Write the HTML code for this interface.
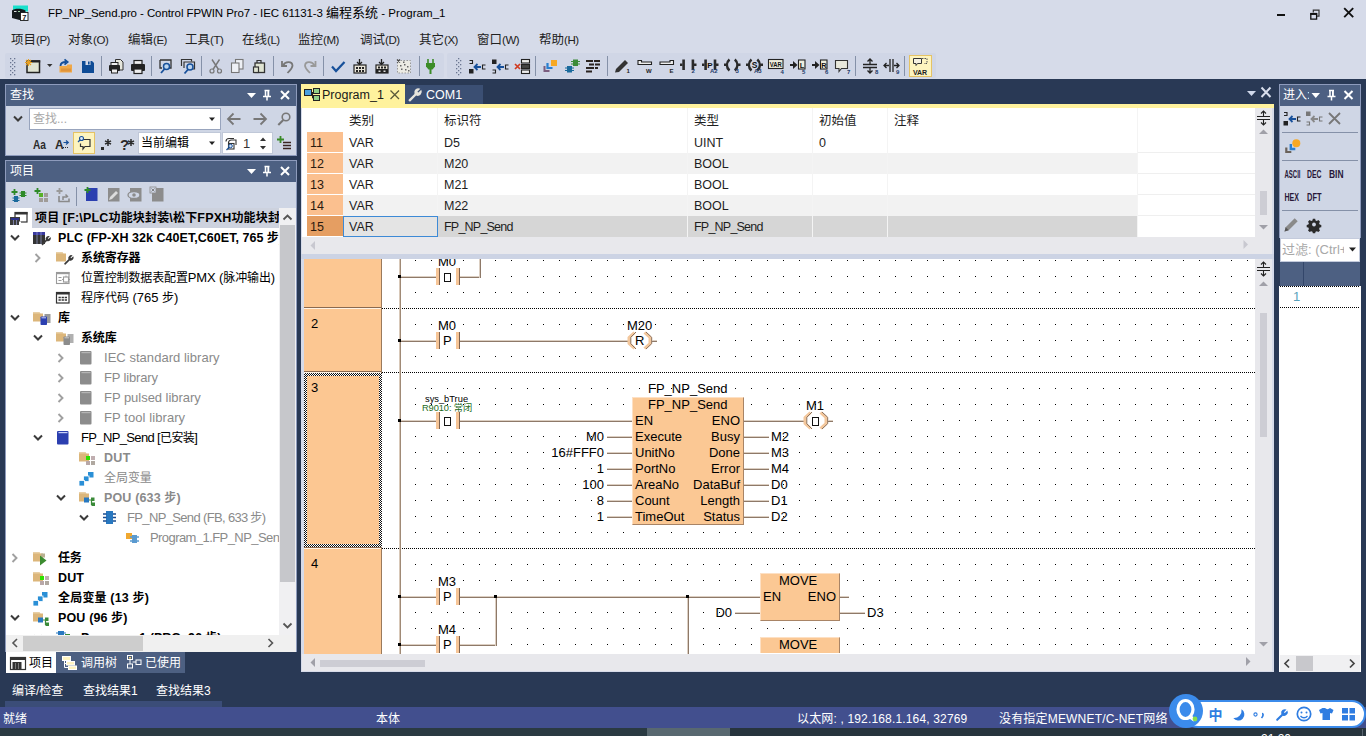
<!DOCTYPE html>
<html lang="zh-CN">
<head>
<meta charset="utf-8">
<title>FP_NP_Send.pro - Control FPWIN Pro7 - IEC 61131-3 编程系统 - Program_1</title>
<style>
html,body{margin:0;padding:0;}
body{width:1366px;height:736px;overflow:hidden;background:#293955;position:relative;
 font-family:"Liberation Sans","Noto Sans CJK SC",sans-serif;font-size:12px;color:#1e1e1e;}
.a{position:absolute;}
.t{position:absolute;white-space:nowrap;line-height:16px;}
svg{position:absolute;overflow:visible;}
#top{left:0;top:0;width:1366px;height:79px;background:#d6dbe9;}
.menu{top:32px;font-size:12px;color:#222;}
.mc{font-size:12.5px;}
.ml{font-size:11.5px;letter-spacing:-0.45px;}
.sep{position:absolute;width:1px;height:20px;top:56px;background:#8591a8;}
.ph{position:absolute;background:#4d6082;border:1px solid #8e9bbc;border-bottom:none;box-sizing:border-box;}
.pht{position:absolute;color:#fff;font-size:12px;line-height:16px;white-space:nowrap;}
.tree{position:absolute;white-space:nowrap;font-size:12px;line-height:16px;color:#000;}
.tb{font-weight:bold;}
.tg{color:#8a8a8a;}
.lad{position:absolute;white-space:nowrap;font-size:13px;line-height:16px;color:#000;font-family:"Liberation Sans",sans-serif;}
.w{position:absolute;background:#c9a685;}
.cell{position:absolute;white-space:nowrap;font-size:12.5px;line-height:16px;color:#1e1e1e;}
</style>
</head>
<body>
<div id="top" class="a"></div>
<div class="a" style="left:5px;top:53px;width:439px;height:25px;background:#d0d6e6;border-radius:2px"></div>
<div class="a" style="left:447px;top:53px;width:489px;height:25px;background:#d0d6e6;border-radius:2px"></div>
<!-- app icon -->
<svg style="left:10px;top:4px" width="22" height="20" viewBox="0 0 22 20">
 <path d="M3 1.500h15v6h-15z" fill="#19e0cc"/>
 <path d="M2 6.500c2-2.500 10-2.500 13.500 0v8.500l-6 1l-7.500-2z" fill="#141a1c"/>
 <rect x="4" y="7" width="2.500" height="1" fill="#e0e0e0"/><rect x="8" y="7" width="2" height="1" fill="#9ad0a0"/>
 <rect x="10.500" y="8.500" width="7.500" height="8" fill="#fff" stroke="#1a1a1a" stroke-width="0.900"/>
 <text x="14.300" y="15.500" font-size="7.500" font-weight="bold" text-anchor="middle" fill="#111" font-family="Liberation Sans, sans-serif">7</text>
</svg>
<div class="t" id="title" style="left:48px;top:5px;font-size:12px;color:#000"><span id="t1" style="font-size:11.5px;letter-spacing:-0.086px">FP_NP_Send.pro - Control FPWIN Pro7 - IEC 61131-3 </span><span id="t2" style="font-size:13px">编程系统</span><span id="t3" style="font-size:11.5px;letter-spacing:0.03px"> - Program_1</span></div>
<!-- window controls -->
<svg style="left:0;top:0" width="1366" height="27">
 <rect x="1277" y="14" width="8" height="2" fill="#111"/>
 <path d="M1310.800 13.800h5.800v5.400h-5.800z" fill="none" stroke="#111" stroke-width="1.300"/><path d="M1310.200 13.900h7" stroke="#111" stroke-width="2"/><path d="M1313.300 12.500v-2.300h5.700v6h-2" fill="none" stroke="#333" stroke-width="1.200"/>
 <path d="M1344.200 8.200l9 9M1353.200 8.200l-9 9" stroke="#111" stroke-width="1.900" fill="none"/>
</svg>
<!-- menu -->
<div class="t menu" style="left:11px"><span class="mc">项目</span><span class="ml">(P)</span></div>
<div class="t menu" style="left:68px"><span class="mc">对象</span><span class="ml">(O)</span></div>
<div class="t menu" style="left:128px"><span class="mc">编辑</span><span class="ml">(E)</span></div>
<div class="t menu" style="left:185px"><span class="mc">工具</span><span class="ml">(T)</span></div>
<div class="t menu" style="left:242px"><span class="mc">在线</span><span class="ml">(L)</span></div>
<div class="t menu" style="left:298px"><span class="mc">监控</span><span class="ml">(M)</span></div>
<div class="t menu" style="left:360px"><span class="mc">调试</span><span class="ml">(D)</span></div>
<div class="t menu" style="left:419px"><span class="mc">其它</span><span class="ml">(X)</span></div>
<div class="t menu" style="left:477px"><span class="mc">窗口</span><span class="ml">(W)</span></div>
<div class="t menu" style="left:539px"><span class="mc">帮助</span><span class="ml">(H)</span></div>
<!-- toolbar separators -->
<div class="sep" style="left:101px"></div><div class="sep" style="left:151px"></div><div class="sep" style="left:201px"></div>
<div class="sep" style="left:273px"></div><div class="sep" style="left:323px"></div><div class="sep" style="left:419px"></div>
<div class="sep" style="left:535px"></div><div class="sep" style="left:607px"></div><div class="sep" style="left:855px"></div><div class="sep" style="left:904px"></div>
<div class="a" style="left:909px;top:55px;width:23px;height:22px;background:#fdf4bf;border:1px solid #e5c365;box-sizing:border-box"></div>
<svg id="tbi" style="left:0;top:0" width="1366" height="80" font-family="Liberation Sans, sans-serif">
<defs>
 <pattern id="grip" x="10" y="58" width="4" height="4" patternUnits="userSpaceOnUse"><rect x="0" y="0" width="1.300" height="1.300" fill="#6a7590"/><rect x="2" y="2" width="1.300" height="1.300" fill="#6a7590"/></pattern>
</defs>
<rect x="10" y="58" width="6" height="18" fill="url(#grip)"/>
<rect x="456" y="58" width="6" height="18" fill="url(#grip)"/>
<!-- new -->
<rect x="27" y="61" width="12.500" height="11.500" fill="#e0e4d2" stroke="#222" stroke-width="1.500"/><rect x="31" y="60.300" width="9.200" height="2.200" fill="#222"/>
<path d="M28.500 59v7M25 62.500h7M26 60l5 5M31 60l-5 5" stroke="#e8a020" stroke-width="1.100"/>
<path d="M47 64h5.500l-2.750 3z" fill="#333"/>
<!-- open -->
<path d="M59.500 72.500v-6.500h7l1-1.500h4.500v8z" fill="#f0a848"/><rect x="61" y="68.500" width="10" height="3" fill="#e0943a"/>
<path d="M60.500 66c0-3 2-4 5.500-4" fill="none" stroke="#17509a" stroke-width="1.800"/><path d="M64.500 59.300l3.200 2.700-3.200 2.700" fill="none" stroke="#17509a" stroke-width="1.700"/>
<!-- save -->
<path d="M82 61h10l2 2v10h-12z" fill="#0f4c96"/><rect x="85.500" y="61" width="5" height="4" fill="#d6dbe9"/><rect x="88" y="61.500" width="1.600" height="3" fill="#0f4c96"/>
<!-- print preview -->
<path d="M115.500 59.500h5l2.500 2.500v8h-7.500z" fill="#e6e6dc" stroke="#333" stroke-width="1"/>
<rect x="109" y="65" width="11" height="6" rx="1" fill="#222"/><rect x="111" y="62.500" width="7" height="3" fill="#eee" stroke="#222" stroke-width="1"/><rect x="111.500" y="69" width="6" height="4" fill="#eee" stroke="#222" stroke-width="1"/>
<!-- print -->
<rect x="131" y="64" width="14" height="7" rx="1" fill="#222"/><rect x="134" y="60.500" width="8" height="4" fill="#eee" stroke="#222" stroke-width="1.200"/><rect x="134" y="69" width="8" height="4.500" fill="#eee" stroke="#222" stroke-width="1.200"/>
<!-- find -->
<path d="M160 60h11v8h-4" fill="none" stroke="#333" stroke-width="1.300"/><path d="M160 60v8h2" fill="none" stroke="#333" stroke-width="1.300"/>
<circle cx="166.500" cy="66.500" r="3" fill="#bcd4ee" stroke="#17509a" stroke-width="1.500"/><path d="M164.500 69l-3.500 4" stroke="#17509a" stroke-width="1.800"/>
<!-- find2 -->
<path d="M181.500 66v-6.500h10v2" fill="none" stroke="#333" stroke-width="1.200"/><path d="M184 68v-6h10.500v7h-3" fill="none" stroke="#333" stroke-width="1.200"/>
<circle cx="190" cy="67" r="3" fill="#bcd4ee" stroke="#17509a" stroke-width="1.500"/><path d="M188 69.500l-3.500 4" stroke="#17509a" stroke-width="1.800"/>
<!-- cut -->
<path d="M212 59.500l6.500 10M219.500 59.500l-6.500 10" stroke="#777" stroke-width="1.400" fill="none"/><circle cx="212" cy="71" r="2" fill="none" stroke="#777" stroke-width="1.200"/><circle cx="219.500" cy="71" r="2" fill="none" stroke="#777" stroke-width="1.200"/>
<!-- copy -->
<rect x="235.500" y="59.500" width="7.500" height="9.500" fill="#eef0f5" stroke="#777" stroke-width="1.100"/><rect x="231.500" y="63" width="7.500" height="9.500" fill="#eef0f5" stroke="#777" stroke-width="1.100"/>
<!-- paste -->
<path d="M257 63v-2.500h4v2.500" fill="none" stroke="#333" stroke-width="1.200"/><rect x="255" y="63" width="9.500" height="9.500" fill="#e0e4d2" stroke="#333" stroke-width="1.300"/><rect x="253.500" y="67" width="5" height="5.500" fill="#e0e4d2" stroke="#333" stroke-width="1.200"/>
<!-- undo redo -->
<path d="M282 61v5h5" fill="none" stroke="#777" stroke-width="1.800"/><path d="M283 65.500c2-4 9-5 9.500 0c0 3-3 5-5 7.500" fill="none" stroke="#777" stroke-width="1.800"/>
<path d="M315.500 61v5h-5" fill="none" stroke="#999" stroke-width="1.800"/><path d="M314.500 65.500c-2-4-9-5-9.500 0c0 3 3 5 5 7.500" fill="none" stroke="#999" stroke-width="1.800"/>
<!-- check -->
<path d="M332 66.500l4 4.500l8.500-9" fill="none" stroke="#17509a" stroke-width="2.200"/>
<!-- download icons -->
<g id="dl1"><path d="M359.500 59v5M357 62l2.500 2.500l2.500-2.500" stroke="#222" stroke-width="1.300" fill="none"/><rect x="354" y="65" width="12" height="8" fill="#e8e4d8" stroke="#222" stroke-width="1.200"/><rect x="356" y="67" width="2" height="2" fill="#222"/><rect x="359" y="67" width="2" height="2" fill="#222"/><rect x="362" y="67" width="2" height="2" fill="#222"/><rect x="356" y="70" width="2" height="2" fill="#222"/><rect x="359" y="70" width="2" height="2" fill="#222"/><rect x="362" y="70" width="2" height="2" fill="#222"/></g>
<g><path d="M381.500 59v5M379 62l2.500 2.500l2.500-2.500" stroke="#222" stroke-width="1.300" fill="none"/><rect x="376" y="65" width="12" height="8" fill="#e8e4d8" stroke="#222" stroke-width="1.200"/><rect x="376" y="69" width="12" height="4" fill="#222"/><rect x="378" y="66.500" width="2" height="2" fill="#222"/><rect x="381" y="66.500" width="2" height="2" fill="#222"/><rect x="384" y="66.500" width="2" height="2" fill="#222"/><rect x="378.500" y="70.500" width="2" height="1.500" fill="#ddd"/><rect x="383.500" y="70.500" width="2" height="1.500" fill="#ddd"/></g>
<g><rect x="397.500" y="60.500" width="13" height="12.500" fill="#ecebe4" stroke="#999" stroke-width="1" stroke-dasharray="1.500 1.500"/><path d="M397 59.500l3 3M400 59.500l-3 3" stroke="#444" stroke-width="1.200"/><rect x="400" y="65" width="1.500" height="1.500" fill="#666"/><rect x="404" y="64" width="1.500" height="1.500" fill="#666"/><rect x="407" y="66" width="1.500" height="1.500" fill="#666"/><rect x="401" y="68.500" width="1.500" height="1.500" fill="#666"/><rect x="405" y="69" width="1.500" height="1.500" fill="#666"/><rect x="408" y="70" width="1.500" height="1.500" fill="#666"/><rect x="403" y="61.500" width="1.500" height="1.500" fill="#666"/></g>
<!-- plug -->
<path d="M428 59v4M433 59v4" stroke="#3c8c28" stroke-width="1.600"/><path d="M426 63h9v3.500l-2.500 3h-4l-2.500-3z" fill="#3c8c28"/><rect x="429.500" y="69" width="2" height="5" fill="#3c8c28"/>
<!-- navigate icons -->
<g><path d="M469.500 60.500h3v3h-3" fill="none" stroke="#222" stroke-width="1.100"/><rect x="469" y="69" width="4.500" height="4.500" fill="#222"/><path d="M481 67h-6M477.500 64l-3 3l3 3" stroke="#17509a" stroke-width="1.800" fill="none"/><path d="M485.500 65h-3v4h3" fill="none" stroke="#222" stroke-width="1.100"/></g>
<g><rect x="492" y="59.500" width="4.500" height="4.500" fill="#222"/><path d="M492.500 70h3v3h-3" fill="none" stroke="#222" stroke-width="1.100"/><path d="M504 67h-6M500.500 64l-3 3l3 3" stroke="#17509a" stroke-width="1.800" fill="none"/><path d="M508.500 65h-3v4h3" fill="none" stroke="#222" stroke-width="1.100"/></g>
<g><rect x="521.500" y="59.500" width="8" height="3.500" fill="#eee" stroke="#222" stroke-width="1.100"/><rect x="521.500" y="64.500" width="8" height="4" fill="#444" stroke="#222" stroke-width="1.100"/><rect x="521.500" y="70" width="8" height="3.500" fill="#eee" stroke="#222" stroke-width="1.100"/><path d="M515 64l5 5M520 64l-5 5" stroke="#d03a20" stroke-width="1.700"/></g>
<!-- pou icons -->
<g><rect x="551" y="60" width="6" height="6" fill="#f7a823"/><path d="M547.500 63v5h5" fill="none" stroke="#2a7fd0" stroke-width="2.200"/><path d="M544.500 66v5h5" fill="none" stroke="#7b5d7e" stroke-width="2"/></g>
<g><rect x="573" y="59.500" width="5" height="6.500" fill="#3a8a38"/><path d="M571 61.500h9M571 64h9" stroke="#3a8a38" stroke-width="1.200"/><rect x="567" y="66" width="5" height="6.500" fill="#1a6a9c"/><path d="M565 68h9M565 70.500h9" stroke="#1a6a9c" stroke-width="1.200"/></g>
<g fill="#2a2320"><rect x="586" y="60" width="7" height="2"/><rect x="594" y="60" width="6" height="2"/><rect x="589" y="63.500" width="5" height="2"/><rect x="595" y="63.500" width="5" height="2"/><rect x="586" y="67" width="8" height="2"/><rect x="595" y="67" width="3" height="2"/><rect x="586" y="70.500" width="6" height="2"/></g>
<!-- pencil -->
<path d="M615 72.500l1-3.500l9-9l3 3l-9 9z" fill="#333"/><text x="626.500" y="73" font-size="6" font-weight="bold" fill="#222">1</text>
<path d="M638 60.500v4h13.500v-2.500h-10v-1.500z" fill="#eee" stroke="#222" stroke-width="1.100"/><text x="646" y="73" font-size="6" font-weight="bold" fill="#222">W</text>
<path d="M673.500 60.500v4h-13.500v-2.500h10v-1.500z" fill="#eee" stroke="#222" stroke-width="1.100"/><text x="669.500" y="73" font-size="6" font-weight="bold" fill="#222">E</text>
<!-- contacts -->
<g fill="#2a2a2a"><rect x="682.300" y="59.500" width="2.600" height="10.500"/><rect x="691.600" y="59.500" width="2.600" height="10.500"/><rect x="680" y="63.500" width="2.500" height="2.500"/><rect x="694" y="63.500" width="2.500" height="2.500"/></g><text x="691.500" y="73" font-size="6" font-weight="bold" fill="#1c3a6a">2</text>
<g fill="#2a2a2a"><rect x="704.300" y="59.500" width="2.600" height="10.500"/><rect x="713.700" y="59.500" width="2.600" height="10.500"/><rect x="702" y="63.500" width="2.500" height="2.500"/><rect x="716" y="63.500" width="2.500" height="2.500"/></g><text x="707.300" y="68" font-size="8" font-weight="bold" fill="#111">P</text><text x="710" y="73" font-size="6" font-weight="bold" fill="#1c3a6a">A2</text>
<g stroke="#2a2a2a" fill="none"><path d="M729.500 59.500c-3.500 3-3.500 8 0 11M734.800 59.500c3.500 3 3.500 8 0 11" stroke-width="2.400"/></g><g fill="#2a2a2a"><rect x="724" y="63.500" width="2.500" height="2.500"/><rect x="738" y="63.500" width="2.500" height="2.500"/></g><text x="735.500" y="73" font-size="6" font-weight="bold" fill="#1c3a6a">3</text>
<g stroke="#2a2a2a" fill="none"><path d="M751.500 59.500c-3.500 3-3.500 8 0 11M757.300 59.500c3.500 3 3.500 8 0 11" stroke-width="2.400"/></g><g fill="#2a2a2a"><rect x="746" y="63.500" width="2.500" height="2.500"/><rect x="760.500" y="63.500" width="2.500" height="2.500"/></g><text x="751.800" y="68.300" font-size="8.500" font-weight="bold" fill="#111">S</text><text x="754" y="73" font-size="6" font-weight="bold" fill="#1c3a6a">A3</text>
<rect x="768.500" y="59.500" width="14.500" height="9" fill="#eeeedd" stroke="#222" stroke-width="1.100"/><text x="769.800" y="67.200" font-size="7.500" font-weight="bold" fill="#111" textLength="12" lengthAdjust="spacingAndGlyphs">VAR</text><text x="780.500" y="73.500" font-size="6" font-weight="bold" fill="#1c3a6a">4</text>
<g><path d="M790 65h4" stroke="#222" stroke-width="2"/><path d="M793 61l4.500 4l-4.500 4z" fill="#222"/><rect x="798.500" y="60" width="6.500" height="9" fill="#eeeedd" stroke="#222" stroke-width="1.100"/><text x="799.800" y="67.500" font-size="7.500" font-weight="bold" fill="#111">L</text><text x="802" y="74" font-size="6" font-weight="bold" fill="#1c3a6a">5</text></g>
<g><path d="M812 65h4" stroke="#222" stroke-width="2"/><path d="M815 61l4.500 4l-4.500 4z" fill="#222"/><rect x="820.500" y="60" width="6.500" height="9" fill="#eeeedd" stroke="#222" stroke-width="1.100"/><text x="821.300" y="67.500" font-size="7.500" font-weight="bold" fill="#111">R</text><text x="825" y="74" font-size="6" font-weight="bold" fill="#1c3a6a">6</text></g>
<path d="M835.500 60.500h12v8h-6l-2.500 3v-3h-3.500z" fill="#e8e8dc" stroke="#333" stroke-width="1.100"/><text x="847" y="74" font-size="6" font-weight="bold" fill="#1c3a6a">7</text>
<g stroke="#222" fill="none" stroke-width="1.300"><path d="M863 64.500h14M863 67.500h14"/><path d="M870 59v5M867.500 61.500l2.500-2.500l2.500 2.500M870 73v-5M867.500 70.500l2.500 2.500l2.500-2.500"/></g><text x="875" y="74" font-size="6" font-weight="bold" fill="#1c3a6a">8</text>
<g stroke="#222" fill="none" stroke-width="1.300"><path d="M890 59v13M893 59v13"/><path d="M884 65.500h5M886.500 63l-2.500 2.500l2.500 2.500M899 65.500h-5M896.500 63l2.500 2.500l-2.500 2.500"/></g><text x="896" y="74" font-size="6" font-weight="bold" fill="#1c3a6a">9</text>
<path d="M913.500 58.500h8v5h-4l-1.500 2v-2h-2.500z" fill="#f4f0e0" stroke="#333" stroke-width="1"/><path d="M922 58.500h5v5h-3" fill="none" stroke="#555" stroke-width="1" stroke-dasharray="1.500 1"/><text x="913" y="74.500" font-size="7" font-weight="bold" fill="#222" textLength="14">VAR</text>
</svg>
<!-- ===== LEFT: find panel ===== -->
<svg width="0" height="0" style="left:0;top:0"><defs>
<symbol id="hdr3" viewBox="0 0 44 12" overflow="visible"><path d="M0 4h9l-4.500 5z" fill="#fff"/><path d="M17.500 1.500h5M18.500 1.500v6M21.500 1.500v6M16 7.500h8M20 7.500v4" stroke="#fff" stroke-width="1.500" fill="none"/><rect x="20.500" y="2" width="1.500" height="5" fill="#fff"/><path d="M34 2l8 8M42 2l-8 8" stroke="#fff" stroke-width="2" fill="none"/></symbol>
<symbol id="wr" viewBox="0 0 10 10" overflow="visible"><path d="M9.500 1.200L7.400 3.300L6.700 2.600L8.800 0.500A3 3 0 0 0 4.600 4.200L0.600 8.200A0.850 0.850 0 0 0 1.800 9.400L5.800 5.400A3 3 0 0 0 9.500 1.200Z"/></symbol>
<symbol id="exp" viewBox="0 0 10 8" overflow="visible"><path d="M1 1.500l4 4l4-4" fill="none" stroke="#3b3b3b" stroke-width="2"/></symbol>
<symbol id="col" viewBox="0 0 8 10" overflow="visible"><path d="M1.500 1l4 4l-4 4" fill="none" stroke="#a0a0a0" stroke-width="1.900"/></symbol>
<symbol id="fold" viewBox="0 0 18 16" overflow="visible"><path d="M0 1h6l1.500 1.500h2.500v8h-10z" fill="#dcb67a"/><path d="M0 1h6l1.500 1.500h-7.500z" fill="#e8cfa6"/></symbol>
<symbol id="bookg" viewBox="0 0 12 14" overflow="visible"><rect x="0" y="0" width="11.500" height="13.500" rx="1" fill="#8c8c8c"/><rect x="1.500" y="1" width="9" height="1.200" fill="#b5b5b5"/></symbol>
<symbol id="bookb" viewBox="0 0 12 14" overflow="visible"><rect x="0" y="0" width="11.500" height="13.500" rx="1" fill="#2b3fb0"/><rect x="1.500" y="1" width="9" height="1.200" fill="#c8d0f8"/></symbol>
<symbol id="dut" viewBox="0 0 18 16" overflow="visible"><use href="#fold" width="18" height="16"/><rect x="7" y="5" width="4" height="4" fill="#2fe000"/><rect x="12" y="5" width="4" height="4" fill="#c0aeb0"/><rect x="7" y="10" width="4" height="4" fill="#b8a8a8"/><rect x="12" y="10" width="4" height="4" fill="#b0a8a0"/></symbol>
<symbol id="glob" viewBox="0 0 16 16" overflow="visible"><rect x="9" y="0" width="5.500" height="5.500" fill="#2a8fd6"/><rect x="4.500" y="4" width="5.500" height="5.500" fill="#2a8fd6" stroke="#fff" stroke-width="0.800"/><rect x="0" y="8.500" width="5.500" height="5.500" fill="#2a8fd6" stroke="#fff" stroke-width="0.800"/></symbol>
<symbol id="pou" viewBox="0 0 18 16" overflow="visible"><use href="#fold" width="18" height="16"/><rect x="5" y="6.500" width="5" height="5" fill="#2878c0"/><path d="M10 9h2.500v4.500h2" fill="none" stroke="#3a8a38" stroke-width="1.200"/><rect x="12" y="6.500" width="3.500" height="3.500" fill="#3a8a38"/><rect x="12.500" y="11.500" width="3.500" height="3.500" fill="#3a8a38"/></symbol>
</defs></svg>
<div class="ph" style="left:5px;top:84px;width:292px;height:22px"></div>
<div class="pht" style="left:10px;top:87px">查找</div>
<svg style="left:247px;top:89px" width="44" height="12"><use href="#hdr3" width="44" height="12"/></svg>
<div class="a" style="left:5px;top:106px;width:292px;height:50px;background:#cfd6e5;border:1px solid #8e9bbc;border-top:none;box-sizing:border-box"></div>
<svg style="left:13px;top:115px" width="10" height="8"><use href="#exp" width="10" height="8"/></svg>
<div class="a" style="left:29px;top:108px;width:192px;height:22px;background:#fff;border:1px solid #98a4bd;box-sizing:border-box"></div>
<div class="t" style="left:33px;top:111px;font-size:12px;color:#a8a8a8">查找...</div>
<div class="a" style="left:138px;top:132px;width:83px;height:22px;background:#fff;border:1px solid #c0c8d8;box-sizing:border-box"></div>
<div class="a" style="left:222px;top:132px;width:51px;height:22px;background:#fff;border:1px solid #c0c8d8;box-sizing:border-box"></div>
<svg style="left:0;top:0" width="300" height="160" font-family="Liberation Sans, sans-serif">
<path d="M209 117.500h6l-3 3.500z" fill="#222"/>
<path d="M240.500 119h-12M233.500 113.500l-5.500 5.500l5.500 5.500" fill="none" stroke="#777" stroke-width="1.800"/>
<path d="M253.500 119h12M260.500 113.500l5.500 5.500l-5.500 5.500" fill="none" stroke="#777" stroke-width="1.800"/>
<circle cx="286" cy="117" r="3.800" fill="none" stroke="#777" stroke-width="1.600"/><path d="M283.300 120l-5 5" stroke="#777" stroke-width="2"/>
<text x="33" y="149" font-size="12" font-weight="bold" fill="#2a2a2a" textLength="13" lengthAdjust="spacingAndGlyphs">Aa</text>
<text x="55" y="149" font-size="12" font-weight="bold" fill="#2a2a2a">A</text><path d="M63.500 142.500h4.500M66 140.500l2.300 2l-2.300 2" fill="none" stroke="#17509a" stroke-width="1.200"/><path d="M63 147.500h6" stroke="#2a2a2a" stroke-width="1" stroke-dasharray="1 1"/>
<rect x="73.500" y="132.500" width="21" height="21" fill="#fdf4bf" stroke="#e5c365" stroke-width="1"/>
<path d="M81.500 139.500h8.500v7h-5l-2 2.500v-2.500h-2.500v-3" fill="none" stroke="#333" stroke-width="1.200"/><circle cx="81.500" cy="138.500" r="2" fill="#dce8f8" stroke="#17509a" stroke-width="1.100"/><path d="M80 140l-2 2" stroke="#17509a" stroke-width="1.300"/>
<rect x="101" y="147" width="3" height="3" fill="#2a2a2a"/><path d="M108 139v7M105 140.800l6 3.400M111 140.800l-6 3.400" stroke="#2a2a2a" stroke-width="1.500"/>
<text x="120" y="150" font-size="15" font-weight="bold" fill="#2a2a2a">?</text><path d="M131 139v7M128 140.800l6 3.400M134 140.800l-6 3.400" stroke="#2a2a2a" stroke-width="1.500"/>
<path d="M209 141.500h6l-3 3.500z" fill="#222"/>
<path d="M226 141.500c0-2 1-3 3-3h5M228.500 143c0-2 1-3 3-3h4.500v5" fill="none" stroke="#333" stroke-width="1.100"/><rect x="228.500" y="143.500" width="5.500" height="5.500" fill="none" stroke="#333" stroke-width="1.100"/><circle cx="230.500" cy="146" r="1.800" fill="#cfe0f5" stroke="#17509a" stroke-width="1"/><path d="M229 147.500l-2.500 2.500" stroke="#17509a" stroke-width="1.200"/>
<path d="M260 141h6l-3-3.500zM260 146h6l-3 3.500z" fill="#333"/>
<path d="M280.500 136v7M277 139.500h7" stroke="#3a8a28" stroke-width="1.800"/><path d="M283 142.500h8M283 145.500h8M283 148.500h8" stroke="#3a2420" stroke-width="1.600"/>
</svg>
<div class="t" style="left:141px;top:135px;font-size:12px;color:#000">当前编辑</div>
<div class="t" style="left:243px;top:136px;font-size:13px;color:#333">1</div>
<!-- ===== LEFT: project panel ===== -->
<div class="ph" style="left:5px;top:160px;width:292px;height:22px"></div>
<div class="pht" style="left:10px;top:163px">项目</div>
<svg style="left:247px;top:165px" width="44" height="12"><use href="#hdr3" width="44" height="12"/></svg>
<div class="a" style="left:5px;top:182px;width:292px;height:26px;background:#cfd6e5;border-left:1px solid #8e9bbc;border-right:1px solid #8e9bbc;box-sizing:border-box"></div>
<div class="a" style="left:5px;top:208px;width:292px;height:444px;background:#fff;border-left:1px solid #8e9bbc;border-right:1px solid #8e9bbc;box-sizing:border-box"></div>
<svg style="left:0;top:176px" width="200" height="30">
<g><path d="M14.500 13v6M11.500 16h6" stroke="#2e8a28" stroke-width="1.800"/><rect x="21" y="15" width="4" height="6" fill="#2e8a28"/><path d="M19.500 17h7M19.500 19.500h7" stroke="#2e8a28" stroke-width="1"/><rect x="14" y="20" width="4" height="6" fill="#1a6a9c"/><path d="M12.500 22h7M12.500 24.500h7" stroke="#1a6a9c" stroke-width="1"/></g>
<g><path d="M37.500 12v6M34.500 15h6" stroke="#2e8a28" stroke-width="1.800"/><rect x="39" y="17" width="4" height="4" fill="#58b028"/><rect x="44" y="17" width="4" height="4" fill="#a09c98"/><rect x="39" y="22" width="4" height="4" fill="#a09c98"/><rect x="44" y="22" width="4" height="4" fill="#a09c98"/></g>
<g><path d="M59.500 12v6M56.500 15h6" stroke="#9a9a9a" stroke-width="1.800"/><path d="M59 20v5.500h10v-3" fill="none" stroke="#8a8a8a" stroke-width="1.600"/><path d="M63 24v-3h4M65.500 18.500l2.500 2.500" fill="none" stroke="#8a8a8a" stroke-width="1.500"/></g>
<rect x="76" y="11" width="1" height="19" fill="#8591a8"/>
<g><path d="M88 12h9.500v13h-11.500v-9z" fill="#2b3fb0"/><path d="M87.500 11v6M84.500 14h6" stroke="#2e8a28" stroke-width="1.800"/></g>
<g><rect x="108" y="12" width="11.500" height="13.500" fill="#8c8c8c"/><path d="M109 24l1-3l6-6l2 2l-6 6z" fill="#dcdcdc"/></g>
<g><rect x="130" y="12" width="11.500" height="13.500" fill="#8c8c8c"/><ellipse cx="134" cy="19" rx="6" ry="3.500" fill="#cfd6e5" stroke="#8c8c8c" stroke-width="1.300"/><circle cx="134" cy="19" r="1.800" fill="#8c8c8c"/></g>
<g><rect x="152" y="12" width="11.500" height="13.500" fill="#8c8c8c"/><rect x="150" y="11" width="6" height="6" fill="#cfd6e5" stroke="#8c8c8c" stroke-width="0.800"/><path d="M151.500 12.500l3 3M154.500 12.500l-3 3" stroke="#777" stroke-width="0.900"/></g>
</svg>

<div class="a" style="left:32px;top:208px;width:247px;height:20px;background:#cdd2de"></div>
<div class="a" id="treeclip" style="left:6px;top:208px;width:273px;height:427px;overflow:hidden">
<svg style="left:4px;top:3px" width="18" height="16"><rect x="5" y="1.500" width="12" height="9.500" fill="none" stroke="#333" stroke-width="1.200"/><rect x="5" y="1" width="12.500" height="2.500" fill="#333"/><rect x="0" y="6" width="10" height="8" fill="#3a3a3a"/><rect x="1" y="7" width="8" height="2" fill="#2b3088"/><path d="M3.500 9v5M6.500 9v5" stroke="#8a90c0" stroke-width="0.800"/><rect x="9" y="10.500" width="2" height="4" fill="#fff"/></svg>
<div class="tree tb" id="tr208" style="left:29px;top:2px;letter-spacing:0.170px">项目 <span style="font-size:12.5px">[F:\PLC</span>功能块封装<span style="font-size:12.5px">\</span>松下<span style="font-size:12.5px">FPXH</span>功能块封装</div>
<svg style="left:4px;top:26px" width="10" height="8"><use href="#exp" width="10" height="8"/></svg>
<svg style="left:27px;top:23px" width="18" height="16"><rect x="0" y="1" width="12" height="12" fill="#333"/><rect x="0" y="1" width="12" height="3" fill="#3a3aa0"/><path d="M4 1v12M8 1v12" stroke="#9aa0d0" stroke-width="0.700"/><rect x="7.500" y="7" width="8" height="8" fill="#fff" opacity="0.0"/><use href="#wr" x="8.300" y="4.800" width="9.700" height="9.700" fill="#3a3a3a"/></svg>
<div class="tree tb" id="tr228" style="left:52px;top:22px;letter-spacing:0.040px"><span style="font-size:12.5px">PLC (FP-XH 32k C40ET,C60ET, 765</span> 步<span style="font-size:12.5px">)</span></div>
<svg style="left:28px;top:45px" width="8" height="10"><use href="#col" width="8" height="10"/></svg>
<svg style="left:50px;top:43px" width="18" height="16"><use href="#fold" width="18" height="16"/><use href="#wr" x="7.800" y="4" width="10" height="10" fill="#3a3a3a"/></svg>
<div class="tree tb" id="tr248" style="left:75px;top:42px;letter-spacing:-0.123px">系统寄存器</div>
<svg style="left:50px;top:63px" width="18" height="16"><rect x="0.500" y="1.500" width="12.500" height="11" fill="none" stroke="#9a9a9a" stroke-width="1.100"/><rect x="0" y="1" width="13.500" height="2.200" fill="#9a9a9a"/><path d="M2.500 6.500h3M2.500 9.500h3" stroke="#9a9a9a" stroke-width="1.200"/><rect x="7.500" y="6" width="5" height="5" fill="#fff" stroke="#9a9a9a" stroke-width="1.100"/><path d="M10 4.500v8M6 8.500h8" stroke="#9a9a9a" stroke-width="0.900" stroke-dasharray="1.500 5"/></svg>
<div class="tree " id="tr268" style="left:75px;top:62px;letter-spacing:-0.132px">位置控制数据表配置<span style="font-size:13px">PMX (</span>脉冲输出<span style="font-size:13px">)</span></div>
<svg style="left:50px;top:83px" width="18" height="16"><rect x="0.500" y="1.500" width="12.500" height="10.500" fill="#fff" stroke="#333" stroke-width="1.200"/><rect x="0" y="1" width="13.500" height="2.500" fill="#333"/><path d="M2.500 6.500h8.500M2.500 9h8.500" stroke="#333" stroke-width="1.300" stroke-dasharray="2.300 0.800"/></svg>
<div class="tree " id="tr288" style="left:75px;top:82px;letter-spacing:0.028px">程序代码 <span style="font-size:13px">(765</span> 步<span style="font-size:13px">)</span></div>
<svg style="left:4px;top:106px" width="10" height="8"><use href="#exp" width="10" height="8"/></svg>
<svg style="left:27px;top:103px" width="18" height="16"><use href="#fold" width="18" height="16"/><rect x="11.500" y="3" width="6" height="9" fill="#9a9a9a"/><rect x="7.500" y="5.500" width="6.500" height="8.500" rx="0.800" fill="#2b3fb0"/><rect x="8.500" y="6.300" width="4.500" height="1" fill="#c8d0f8"/></svg>
<div class="tree tb" id="tr308" style="left:52px;top:102px;letter-spacing:0.184px">库</div>
<svg style="left:27px;top:126px" width="10" height="8"><use href="#exp" width="10" height="8"/></svg>
<svg style="left:50px;top:123px" width="18" height="16"><use href="#fold" width="18" height="16"/><rect x="11.500" y="3" width="6" height="9" fill="#b0b0b0"/><rect x="7.500" y="5.500" width="6.500" height="8.500" rx="0.800" fill="#8c8c8c"/><rect x="8.500" y="6.300" width="4.500" height="1" fill="#c8c8c8"/></svg>
<div class="tree tb" id="tr328" style="left:75px;top:122px;letter-spacing:-0.172px">系统库</div>
<svg style="left:51px;top:145px" width="8" height="10"><use href="#col" width="8" height="10"/></svg>
<svg style="left:73px;top:143px" width="18" height="16"><use href="#bookg" x="1" y="0" width="12" height="14"/></svg>
<div class="tree tg" id="tr348" style="left:98px;top:142px;letter-spacing:0.035px"><span style="font-size:13px">IEC standard library</span></div>
<svg style="left:51px;top:165px" width="8" height="10"><use href="#col" width="8" height="10"/></svg>
<svg style="left:73px;top:163px" width="18" height="16"><use href="#bookg" x="1" y="0" width="12" height="14"/></svg>
<div class="tree tg" id="tr368" style="left:98px;top:162px;letter-spacing:-0.159px"><span style="font-size:13px">FP library</span></div>
<svg style="left:51px;top:185px" width="8" height="10"><use href="#col" width="8" height="10"/></svg>
<svg style="left:73px;top:183px" width="18" height="16"><use href="#bookg" x="1" y="0" width="12" height="14"/></svg>
<div class="tree tg" id="tr388" style="left:98px;top:182px;letter-spacing:-0.030px"><span style="font-size:13px">FP pulsed library</span></div>
<svg style="left:51px;top:205px" width="8" height="10"><use href="#col" width="8" height="10"/></svg>
<svg style="left:73px;top:203px" width="18" height="16"><use href="#bookg" x="1" y="0" width="12" height="14"/></svg>
<div class="tree tg" id="tr408" style="left:98px;top:202px;letter-spacing:0.082px"><span style="font-size:13px">FP tool library</span></div>
<svg style="left:27px;top:226px" width="10" height="8"><use href="#exp" width="10" height="8"/></svg>
<svg style="left:50px;top:223px" width="18" height="16"><use href="#bookb" x="1" y="0" width="12" height="14"/></svg>
<div class="tree " id="tr428" style="left:75px;top:222px;letter-spacing:-0.635px"><span style="font-size:13px">FP_NP_Send [</span>已安装<span style="font-size:13px">]</span></div>
<svg style="left:73px;top:243px" width="18" height="16"><use href="#dut" width="18" height="16"/></svg>
<div class="tree tb tg" id="tr448" style="left:98px;top:242px;letter-spacing:0.299px"><span style="font-size:12.5px">DUT</span></div>
<svg style="left:73px;top:263px" width="18" height="16"><use href="#glob" x="0" y="1" width="16" height="16"/></svg>
<div class="tree tg" id="tr468" style="left:98px;top:262px;letter-spacing:-0.054px">全局变量</div>
<svg style="left:50px;top:286px" width="10" height="8"><use href="#exp" width="10" height="8"/></svg>
<svg style="left:73px;top:283px" width="18" height="16"><use href="#pou" width="18" height="16"/></svg>
<div class="tree tb tg" id="tr488" style="left:98px;top:282px;letter-spacing:0.154px"><span style="font-size:12.5px">POU (633</span> 步<span style="font-size:12.5px">)</span></div>
<svg style="left:73px;top:306px" width="10" height="8"><use href="#exp" width="10" height="8"/></svg>
<svg style="left:96px;top:303px" width="18" height="16"><rect x="4" y="0" width="7" height="13" fill="#2878c0"/><path d="M1 3h13M1 6.500h13M1 10h13" stroke="#1a4c90" stroke-width="1.600" stroke-dasharray="3.500 6.500"/></svg>
<div class="tree tg" id="tr508" style="left:121px;top:302px;letter-spacing:-0.648px"><span style="font-size:13px">FP_NP_Send (FB, 633</span> 步<span style="font-size:13px">)</span></div>
<svg style="left:119px;top:323px" width="18" height="16"><rect x="1" y="2" width="6" height="6" fill="#f0a830"/><rect x="7" y="4" width="5" height="8" fill="#5a9ad0"/><path d="M5 6h9M5 10h9" stroke="#5a9ad0" stroke-width="1.300" stroke-dasharray="2.500 4.500"/></svg>
<div class="tree tg" id="tr528" style="left:144px;top:322px;letter-spacing:-0.571px"><span style="font-size:13px">Program_1.FP_NP_Send</span></div>
<svg style="left:5px;top:345px" width="8" height="10"><use href="#col" width="8" height="10"/></svg>
<svg style="left:27px;top:343px" width="18" height="16"><use href="#fold" width="18" height="16"/><rect x="8" y="2.500" width="4" height="4" fill="#b8b090"/><path d="M7 4.500l6.500 5l-6.500 5z" fill="#3c8c30"/></svg>
<div class="tree tb" id="tr548" style="left:52px;top:342px;letter-spacing:-0.158px">任务</div>
<svg style="left:27px;top:363px" width="18" height="16"><use href="#dut" width="18" height="16"/></svg>
<div class="tree tb" id="tr568" style="left:52px;top:362px;letter-spacing:0.099px"><span style="font-size:12.5px">DUT</span></div>
<svg style="left:27px;top:383px" width="18" height="16"><use href="#glob" x="0" y="1" width="16" height="16"/></svg>
<div class="tree tb" id="tr588" style="left:52px;top:382px;letter-spacing:0.188px">全局变量 <span style="font-size:12.5px">(13</span> 步<span style="font-size:12.5px">)</span></div>
<svg style="left:4px;top:406px" width="10" height="8"><use href="#exp" width="10" height="8"/></svg>
<svg style="left:27px;top:403px" width="18" height="16"><use href="#pou" width="18" height="16"/></svg>
<div class="tree tb" id="tr608" style="left:52px;top:402px;letter-spacing:0.144px"><span style="font-size:12.5px">POU (96</span> 步<span style="font-size:12.5px">)</span></div>
<svg style="left:27px;top:426px" width="10" height="8"><use href="#exp" width="10" height="8"/></svg>
<svg style="left:50px;top:423px" width="18" height="16"><rect x="2" y="0" width="6" height="8" fill="#2878c0"/><path d="M0 2h10M0 6h10" stroke="#2878c0" stroke-width="1.200"/><rect x="9" y="3" width="5" height="7" fill="#3a8a38"/></svg>
<div class="tree tb" id="tr628" style="left:75px;top:422px"><span style="font-size:12.5px">Program_1 (PRG, 96</span> 步<span style="font-size:12.5px">)</span></div>
</div>
<!-- scrollbars -->
<div class="a" style="left:279px;top:208px;width:17px;height:427px;background:#f0f0f2"></div>
<div class="a" style="left:280px;top:225px;width:15px;height:357px;background:#c6c7cb"></div>
<svg style="left:279px;top:208px" width="17" height="426"><path d="M4.500 11.500l4-4l4 4" fill="none" stroke="#555" stroke-width="1.800"/><path d="M4.500 415.500l4 4l4-4" fill="none" stroke="#555" stroke-width="1.800"/></svg>
<div class="a" style="left:6px;top:635px;width:290px;height:17px;background:#f0f0f0"></div>
<div class="a" style="left:23px;top:636px;width:120px;height:15px;background:#cdcdcd"></div>
<svg style="left:6px;top:635px" width="276" height="17"><path d="M11 4l-4 4l4 4" fill="none" stroke="#555" stroke-width="1.600"/><path d="M262.500 4l4 4l-4 4" fill="none" stroke="#555" stroke-width="1.600"/></svg>
<!-- bottom tabs -->
<div class="a" style="left:56px;top:652px;width:129px;height:21px;background:#4d6082"></div>
<div class="a" style="left:6px;top:652px;width:50px;height:21px;background:#fff"></div>
<svg style="left:10px;top:655px" width="18" height="16"><rect x="0.500" y="2.500" width="15" height="12" fill="#fff" stroke="#333" stroke-width="1.200"/><rect x="0" y="2" width="16" height="3" fill="#333"/><rect x="2.500" y="7" width="9" height="7.500" fill="#333"/><path d="M5.500 8v6M8.500 8v6" stroke="#999" stroke-width="0.700"/></svg>
<div class="t" style="left:29px;top:655px;font-size:12px;color:#000">项目</div>
<svg style="left:62px;top:656px" width="16" height="14"><rect x="0.500" y="0.500" width="8" height="4" fill="#fff4c0" stroke="#fff" stroke-width="1"/><rect x="4.500" y="5.500" width="8" height="3.500" fill="#fff4c0" stroke="#fff" stroke-width="1"/><rect x="6.500" y="10" width="8" height="3.500" fill="#fff4c0" stroke="#fff" stroke-width="1"/><path d="M2.500 5v6.500h4M2.500 7.500h2" fill="none" stroke="#fff" stroke-width="1"/></svg>
<div class="t" style="left:81px;top:655px;font-size:12px;color:#fff">调用树</div>
<svg style="left:127px;top:655px" width="16" height="16"><rect x="0.500" y="0.500" width="5" height="4" fill="none" stroke="#fff" stroke-width="1"/><rect x="0.500" y="9" width="5" height="4" fill="none" stroke="#fff" stroke-width="1"/><rect x="9" y="5" width="5" height="4.500" fill="none" stroke="#fff" stroke-width="1"/><path d="M3 4.500v4.500M5.500 7h3.500" stroke="#fff" stroke-width="1"/><rect x="2" y="2" width="2" height="1.500" fill="#f0d070"/></svg>
<div class="t" style="left:145px;top:655px;font-size:12px;color:#fff">已使用</div>
<!-- ===== CENTER ===== -->
<div class="a" style="left:301px;top:84px;width:104px;height:21px;background:#fff29d"></div>
<div class="a" style="left:405px;top:85px;width:78px;height:19px;background:#3b4f73"></div>
<svg style="left:304px;top:88px" width="18" height="14"><rect x="0.500" y="1.500" width="7" height="6" fill="#4aa0e0" stroke="#222" stroke-width="1"/><rect x="9.500" y="0.500" width="6" height="5" fill="#8fd08a" stroke="#222" stroke-width="1"/><rect x="9.500" y="7.500" width="6" height="5" fill="#8fd08a" stroke="#222" stroke-width="1"/><path d="M7.500 4.500h2M8.500 4.500v5.500h1" fill="none" stroke="#222" stroke-width="1"/></svg>
<div class="t" style="left:322px;top:87px;font-size:12.500px;color:#1a1a1a">Program_1</div>
<svg style="left:390px;top:90px" width="10" height="10"><path d="M0.500 0.500l8.500 8.500M9 0.500l-8.500 8.500" stroke="#5a5a3a" stroke-width="1.300" fill="none"/></svg>
<svg style="left:408px;top:88px" width="14" height="14" viewBox="0 0 10 10"><path d="M9.500 1.200L7.400 3.300L6.700 2.600L8.800 0.500A3 3 0 0 0 4.600 4.200L0.600 8.200A0.850 0.850 0 0 0 1.800 9.400L5.800 5.400A3 3 0 0 0 9.500 1.200Z" fill="#e6e4dc"/></svg>
<div class="t" style="left:426px;top:87px;font-size:12.500px;color:#fff">COM1</div>
<svg style="left:1246px;top:86px" width="28" height="14"><path d="M1 5h9l-4.500 5z" fill="#d0d8ea"/><path d="M15.500 1.500l9 9.500M24.500 1.500l-9 9.500" stroke="#d8deec" stroke-width="2" fill="none"/></svg>
<div class="a" style="left:301px;top:104px;width:973px;height:4px;background:#fff29d"></div>
<div class="a" style="left:301px;top:108px;width:973px;height:564px;background:#d6dbe9"></div>

<div class="a" style="left:302px;top:108px;width:953px;height:129px;background:#fff"></div>
<div class="cell" style="left:349px;top:113px">类别</div>
<div class="cell" style="left:444px;top:113px">标识符</div>
<div class="cell" style="left:694px;top:113px">类型</div>
<div class="cell" style="left:819px;top:113px">初始值</div>
<div class="cell" style="left:894px;top:113px">注释</div>
<div class="a" style="left:343px;top:132px;width:795px;height:21px;background:#fff"></div>
<div class="a" style="left:307px;top:132px;width:36px;height:20px;background:#fbc08f"></div>
<div class="cell" style="left:310px;top:135px;font-size:12.5px;color:#2a1a10">11</div>
<div class="cell" style="left:349px;top:135px">VAR</div>
<div class="cell" style="left:444px;top:135px">D5</div>
<div class="cell" style="left:694px;top:135px">UINT</div>
<div class="cell" style="left:819px;top:135px">0</div>
<div class="a" style="left:343px;top:153px;width:795px;height:21px;background:#f2f2f2"></div>
<div class="a" style="left:307px;top:153px;width:36px;height:20px;background:#fbc08f"></div>
<div class="cell" style="left:310px;top:156px;font-size:12.5px;color:#2a1a10">12</div>
<div class="cell" style="left:349px;top:156px">VAR</div>
<div class="cell" style="left:444px;top:156px">M20</div>
<div class="cell" style="left:694px;top:156px">BOOL</div>
<div class="a" style="left:343px;top:174px;width:795px;height:21px;background:#fff"></div>
<div class="a" style="left:307px;top:174px;width:36px;height:20px;background:#fbc08f"></div>
<div class="cell" style="left:310px;top:177px;font-size:12.5px;color:#2a1a10">13</div>
<div class="cell" style="left:349px;top:177px">VAR</div>
<div class="cell" style="left:444px;top:177px">M21</div>
<div class="cell" style="left:694px;top:177px">BOOL</div>
<div class="a" style="left:343px;top:195px;width:795px;height:21px;background:#f2f2f2"></div>
<div class="a" style="left:307px;top:195px;width:36px;height:20px;background:#fbc08f"></div>
<div class="cell" style="left:310px;top:198px;font-size:12.5px;color:#2a1a10">14</div>
<div class="cell" style="left:349px;top:198px">VAR</div>
<div class="cell" style="left:444px;top:198px">M22</div>
<div class="cell" style="left:694px;top:198px">BOOL</div>
<div class="a" style="left:343px;top:216px;width:795px;height:21px;background:#d6d6d6"></div>
<div class="a" style="left:307px;top:216px;width:36px;height:20px;background:#e59e62"></div>
<div class="cell" style="left:310px;top:219px;font-size:12.5px;color:#2a1a10">15</div>
<div class="cell" style="left:349px;top:219px">VAR</div>
<div class="cell" style="left:444px;top:219px;letter-spacing:-0.78px">FP_NP_Send</div>
<div class="cell" style="left:694px;top:219px;letter-spacing:-0.78px">FP_NP_Send</div>
<div class="a" style="left:1138px;top:152px;width:117px;height:1px;background:#efefef"></div>
<div class="a" style="left:1138px;top:173px;width:117px;height:1px;background:#efefef"></div>
<div class="a" style="left:1138px;top:194px;width:117px;height:1px;background:#efefef"></div>
<div class="a" style="left:1138px;top:215px;width:117px;height:1px;background:#efefef"></div>
<div class="a" style="left:437px;top:108px;width:1px;height:129px;background:#f4f4f4"></div>
<div class="a" style="left:687px;top:108px;width:1px;height:129px;background:#f4f4f4"></div>
<div class="a" style="left:812px;top:108px;width:1px;height:129px;background:#f4f4f4"></div>
<div class="a" style="left:887px;top:108px;width:1px;height:129px;background:#f4f4f4"></div>
<div class="a" style="left:1137px;top:108px;width:1px;height:129px;background:#f4f4f4"></div>
<div class="a" style="left:343px;top:216px;width:95px;height:21px;border:1px solid #3d8ad6;background:#e4e4e4;box-sizing:border-box"></div>
<div class="cell" style="left:349px;top:219px">VAR</div>
<div class="a" style="left:1255px;top:108px;width:17px;height:129px;background:#e8e8ec"></div>
<div class="a" style="left:1260px;top:191px;width:7px;height:24px;background:#cdcdd4"></div>
<div class="a" style="left:302px;top:237px;width:970px;height:17px;background:#e8e8ec"></div>
<div class="a" style="left:301px;top:254px;width:973px;height:5px;background:#ccd3e4"></div>
<svg style="left:1255px;top:108px" width="17" height="150"><g stroke="#222" stroke-width="1.100" fill="none"><path d="M2 8.500h13M2 11.500h13M8.500 3v5M8.500 17v-5"/><path d="M6 5.500l2.500-2.500l2.500 2.500M6 14.500l2.500 2.500l2.500-2.500"/></g><path d="M4 26h9l-4.500-4.500z" fill="#a0a0a8"/><path d="M4 117h9l-4.500 4.500z" fill="#a0a0a8"/><path d="M-11.500 132v9l4.500-4.500z" fill="#c8c8d0"/></svg>
<svg style="left:302px;top:237px" width="20" height="17"><path d="M13 4v9l-4.500-4.500z" fill="#c8c8d0"/></svg>

<div class="a" style="left:0;top:0;width:1366px;height:736px;clip-path:inset(259px 111px 82px 304px)">
<div class="a" style="left:304px;top:259px;width:78px;height:395px;background:#fcc792"></div>
<div class="a" style="left:382px;top:259px;width:873px;height:395px;background:#fff"></div>
<svg style="left:382px;top:259px" width="873" height="394"><defs><pattern id="dots" x="33" y="1" width="16" height="16" patternUnits="userSpaceOnUse"><rect x="0" y="0" width="1" height="1" fill="#000"/></pattern></defs><rect x="33" y="0" width="833" height="394" fill="url(#dots)"/></svg>

<div class="a" style="left:382px;top:307px;width:873px;height:3px;background:#fff"></div>
<div class="a" style="left:382px;top:308px;width:873px;height:1px;background:repeating-linear-gradient(90deg,#000 0 1px,#fff 1px 2px)"></div>
<div class="a" style="left:382px;top:371px;width:873px;height:3px;background:#fff"></div>
<div class="a" style="left:382px;top:372px;width:873px;height:1px;background:repeating-linear-gradient(90deg,#000 0 1px,#fff 1px 2px)"></div>
<div class="a" style="left:382px;top:547px;width:873px;height:3px;background:#fff"></div>
<div class="a" style="left:382px;top:548px;width:873px;height:1px;background:repeating-linear-gradient(90deg,#000 0 1px,#fff 1px 2px)"></div>
<div class="a" style="left:304px;top:307px;width:78px;height:1px;background:#8a6a50"></div>
<div class="a" style="left:304px;top:308px;width:78px;height:1px;background:#fff2e4"></div>
<div class="a" style="left:304px;top:371px;width:78px;height:1px;background:#8a6a50"></div>
<div class="a" style="left:304px;top:372px;width:78px;height:1px;background:#fff2e4"></div>
<div class="a" style="left:304px;top:547px;width:78px;height:1px;background:#8a6a50"></div>
<div class="a" style="left:304px;top:548px;width:78px;height:1px;background:#fff2e4"></div>
<div class="a" style="left:381px;top:259px;width:1px;height:395px;background:#9a7a5c"></div>
<div class="a" style="left:304px;top:373px;width:78px;height:174px;background:conic-gradient(#111 25%,#fff 0 50%,#111 0 75%,#fff 0) 0 0/2px 2px;"></div>
<div class="a" style="left:307px;top:376px;width:72px;height:168px;background:#fcc792"></div>
<div class="lad" style="left:311px;top:316px">2</div>
<div class="lad" style="left:311px;top:380px">3</div>
<div class="lad" style="left:311px;top:556px">4</div>
<div class="a" style="left:399px;top:259px;width:2px;height:395px;background:linear-gradient(90deg,#d8c8b8 50%,#a08a76 50%)"></div>
<div class="a" style="left:401px;top:276px;width:35px;height:2px;background:linear-gradient(#dccfc2 50%,#8e7968 50%)"></div>
<div class="a" style="left:440px;top:268px;width:16px;height:17px;background:#fff"></div>
<div class="a" style="left:436px;top:268px;width:3px;height:17px;background:#f6c597"></div>
<div class="a" style="left:439px;top:268px;width:1px;height:17px;background:#7d6250"></div>
<div class="a" style="left:456px;top:268px;width:3px;height:17px;background:#f6c597"></div>
<div class="a" style="left:459px;top:268px;width:1px;height:17px;background:#7d6250"></div>
<div class="a" style="left:444px;top:273px;width:7px;height:9px;border:1px solid #111;box-sizing:border-box;background:#fff"></div>
<div class="a" style="left:460px;top:276px;width:20px;height:2px;background:linear-gradient(#dccfc2 50%,#8e7968 50%)"></div>
<div class="a" style="left:479px;top:259px;width:2px;height:19px;background:linear-gradient(90deg,#dccfc2 50%,#8e7968 50%)"></div>
<div class="lad" style="left:438px;top:254px;">M0</div>
<div class="a" style="left:401px;top:340px;width:35px;height:2px;background:linear-gradient(#dccfc2 50%,#8e7968 50%)"></div>
<div class="a" style="left:440px;top:332px;width:16px;height:17px;background:#fff"></div>
<div class="a" style="left:436px;top:332px;width:3px;height:17px;background:#f6c597"></div>
<div class="a" style="left:439px;top:332px;width:1px;height:17px;background:#7d6250"></div>
<div class="a" style="left:456px;top:332px;width:3px;height:17px;background:#f6c597"></div>
<div class="a" style="left:459px;top:332px;width:1px;height:17px;background:#7d6250"></div>
<div class="lad" style="left:443px;top:333px">P</div>
<div class="a" style="left:460px;top:340px;width:169px;height:2px;background:linear-gradient(#dccfc2 50%,#8e7968 50%)"></div>
<svg style="left:628px;top:331px" width="26" height="20"><rect x="3" y="1" width="20" height="17" fill="#fff"/><path d="M6.500 1.500L1 6.500L1 12.500L6.500 17.500" fill="none" stroke="#f3c79c" stroke-width="3" stroke-linejoin="round"/><path d="M8 1L2.800 6.300L2.800 12.700L8 18" fill="none" stroke="#8a6e58" stroke-width="1"/><path d="M16.500 1.500L22 6.500L22 12.500L16.500 17.500" fill="none" stroke="#f3c79c" stroke-width="3" stroke-linejoin="round"/><path d="M18 1L23.700 6.300L23.700 12.700L18 18" fill="none" stroke="#8a6e58" stroke-width="1"/></svg>
<div class="lad" style="left:635px;top:333px">R</div>
<div class="a" style="left:652px;top:340px;width:5px;height:2px;background:linear-gradient(#dccfc2 50%,#8e7968 50%)"></div>
<div class="lad" style="left:438px;top:318px;">M0</div>
<div class="lad" style="left:627px;top:318px;">M20</div>
<div class="a" style="left:401px;top:420px;width:35px;height:2px;background:linear-gradient(#dccfc2 50%,#8e7968 50%)"></div>
<div class="a" style="left:440px;top:412px;width:16px;height:17px;background:#fff"></div>
<div class="a" style="left:436px;top:412px;width:3px;height:17px;background:#f6c597"></div>
<div class="a" style="left:439px;top:412px;width:1px;height:17px;background:#7d6250"></div>
<div class="a" style="left:456px;top:412px;width:3px;height:17px;background:#f6c597"></div>
<div class="a" style="left:459px;top:412px;width:1px;height:17px;background:#7d6250"></div>
<div class="a" style="left:444px;top:417px;width:7px;height:9px;border:1px solid #111;box-sizing:border-box;background:#fff"></div>
<div class="a" style="left:460px;top:420px;width:172px;height:2px;background:linear-gradient(#dccfc2 50%,#8e7968 50%)"></div>
<div class="lad" style="left:425px;top:393px;font-size:9.3px;line-height:12px">sys_bTrue</div>
<div class="lad" style="left:422px;top:402px;font-size:9.3px;line-height:12px;letter-spacing:-0.1px;color:#1d6b1d;font-family:'Liberation Sans','Noto Sans CJK SC',sans-serif">R9010: 常闭</div>
<div class="lad" style="left:648px;top:381px;">FP_NP_Send</div>
<div class="a" style="left:632px;top:397px;width:112px;height:128px;background:#fbc894;box-sizing:border-box;border-right:1px solid #a88466;border-bottom:1px solid #a88466;border-left:1px solid #fde0c4;border-top:1px solid #fde0c4"></div>
<div class="lad" style="left:648px;top:397px;">FP_NP_Send</div>
<div class="lad" style="left:635px;top:413px">EN</div>
<div class="lad" style="right:626px;top:413px">ENO</div>
<div class="lad" style="left:635px;top:429px">Execute</div>
<div class="lad" style="right:626px;top:429px">Busy</div>
<div class="a" style="left:607px;top:436px;width:25px;height:2px;background:linear-gradient(#dccfc2 50%,#8e7968 50%)"></div>
<div class="lad" style="right:762px;top:429px">M0</div>
<div class="a" style="left:744px;top:436px;width:25px;height:2px;background:linear-gradient(#dccfc2 50%,#8e7968 50%)"></div>
<div class="lad" style="left:771px;top:429px">M2</div>
<div class="lad" style="left:635px;top:445px">UnitNo</div>
<div class="lad" style="right:626px;top:445px">Done</div>
<div class="a" style="left:607px;top:452px;width:25px;height:2px;background:linear-gradient(#dccfc2 50%,#8e7968 50%)"></div>
<div class="lad" style="right:762px;top:445px">16#FFF0</div>
<div class="a" style="left:744px;top:452px;width:25px;height:2px;background:linear-gradient(#dccfc2 50%,#8e7968 50%)"></div>
<div class="lad" style="left:771px;top:445px">M3</div>
<div class="lad" style="left:635px;top:461px">PortNo</div>
<div class="lad" style="right:626px;top:461px">Error</div>
<div class="a" style="left:607px;top:468px;width:25px;height:2px;background:linear-gradient(#dccfc2 50%,#8e7968 50%)"></div>
<div class="lad" style="right:762px;top:461px">1</div>
<div class="a" style="left:744px;top:468px;width:25px;height:2px;background:linear-gradient(#dccfc2 50%,#8e7968 50%)"></div>
<div class="lad" style="left:771px;top:461px">M4</div>
<div class="lad" style="left:635px;top:477px">AreaNo</div>
<div class="lad" style="right:626px;top:477px">DataBuf</div>
<div class="a" style="left:607px;top:484px;width:25px;height:2px;background:linear-gradient(#dccfc2 50%,#8e7968 50%)"></div>
<div class="lad" style="right:762px;top:477px">100</div>
<div class="a" style="left:744px;top:484px;width:25px;height:2px;background:linear-gradient(#dccfc2 50%,#8e7968 50%)"></div>
<div class="lad" style="left:771px;top:477px">D0</div>
<div class="lad" style="left:635px;top:493px">Count</div>
<div class="lad" style="right:626px;top:493px">Length</div>
<div class="a" style="left:607px;top:500px;width:25px;height:2px;background:linear-gradient(#dccfc2 50%,#8e7968 50%)"></div>
<div class="lad" style="right:762px;top:493px">8</div>
<div class="a" style="left:744px;top:500px;width:25px;height:2px;background:linear-gradient(#dccfc2 50%,#8e7968 50%)"></div>
<div class="lad" style="left:771px;top:493px">D1</div>
<div class="lad" style="left:635px;top:509px">TimeOut</div>
<div class="lad" style="right:626px;top:509px">Status</div>
<div class="a" style="left:607px;top:516px;width:25px;height:2px;background:linear-gradient(#dccfc2 50%,#8e7968 50%)"></div>
<div class="lad" style="right:762px;top:509px">1</div>
<div class="a" style="left:744px;top:516px;width:25px;height:2px;background:linear-gradient(#dccfc2 50%,#8e7968 50%)"></div>
<div class="lad" style="left:771px;top:509px">D2</div>
<div class="a" style="left:744px;top:420px;width:61px;height:2px;background:linear-gradient(#dccfc2 50%,#8e7968 50%)"></div>
<svg style="left:804px;top:411px" width="26" height="20"><rect x="3" y="1" width="20" height="17" fill="#fff"/><path d="M6.500 1.500L1 6.500L1 12.500L6.500 17.500" fill="none" stroke="#f3c79c" stroke-width="3" stroke-linejoin="round"/><path d="M8 1L2.800 6.300L2.800 12.700L8 18" fill="none" stroke="#8a6e58" stroke-width="1"/><path d="M16.500 1.500L22 6.500L22 12.500L16.500 17.500" fill="none" stroke="#f3c79c" stroke-width="3" stroke-linejoin="round"/><path d="M18 1L23.700 6.300L23.700 12.700L18 18" fill="none" stroke="#8a6e58" stroke-width="1"/></svg>
<div class="a" style="left:812px;top:417px;width:7px;height:9px;border:1px solid #111;box-sizing:border-box;background:#fff"></div>
<div class="a" style="left:828px;top:420px;width:5px;height:2px;background:linear-gradient(#dccfc2 50%,#8e7968 50%)"></div>
<div class="lad" style="left:806px;top:398px;">M1</div>
<div class="a" style="left:401px;top:596px;width:35px;height:2px;background:linear-gradient(#dccfc2 50%,#8e7968 50%)"></div>
<div class="a" style="left:440px;top:588px;width:16px;height:17px;background:#fff"></div>
<div class="a" style="left:436px;top:588px;width:3px;height:17px;background:#f6c597"></div>
<div class="a" style="left:439px;top:588px;width:1px;height:17px;background:#7d6250"></div>
<div class="a" style="left:456px;top:588px;width:3px;height:17px;background:#f6c597"></div>
<div class="a" style="left:459px;top:588px;width:1px;height:17px;background:#7d6250"></div>
<div class="lad" style="left:443px;top:589px">P</div>
<div class="a" style="left:460px;top:596px;width:300px;height:2px;background:linear-gradient(#dccfc2 50%,#8e7968 50%)"></div>
<div class="a" style="left:401px;top:644px;width:35px;height:2px;background:linear-gradient(#dccfc2 50%,#8e7968 50%)"></div>
<div class="a" style="left:440px;top:636px;width:16px;height:17px;background:#fff"></div>
<div class="a" style="left:436px;top:636px;width:3px;height:17px;background:#f6c597"></div>
<div class="a" style="left:439px;top:636px;width:1px;height:17px;background:#7d6250"></div>
<div class="a" style="left:456px;top:636px;width:3px;height:17px;background:#f6c597"></div>
<div class="a" style="left:459px;top:636px;width:1px;height:17px;background:#7d6250"></div>
<div class="lad" style="left:443px;top:637px">P</div>
<div class="a" style="left:460px;top:644px;width:36px;height:2px;background:linear-gradient(#dccfc2 50%,#8e7968 50%)"></div>
<div class="a" style="left:495px;top:596px;width:2px;height:50px;background:linear-gradient(90deg,#dccfc2 50%,#8e7968 50%)"></div>
<div class="a" style="left:687px;top:596px;width:2px;height:58px;background:linear-gradient(90deg,#dccfc2 50%,#8e7968 50%)"></div>
<div class="lad" style="left:438px;top:574px;">M3</div>
<div class="lad" style="left:438px;top:622px;">M4</div>
<div class="a" style="left:760px;top:573px;width:80px;height:48px;background:#fbc894;box-sizing:border-box;border-right:1px solid #a88466;border-bottom:1px solid #a88466;border-left:1px solid #fde0c4;border-top:1px solid #fde0c4"></div>
<div class="lad" style="left:779px;top:573px;">MOVE</div>
<div class="lad" style="left:763px;top:589px;">EN</div>
<div class="lad" style="right:530px;top:589px">ENO</div>
<div class="a" style="left:840px;top:596px;width:9px;height:2px;background:linear-gradient(#dccfc2 50%,#8e7968 50%)"></div>
<div class="a" style="left:735px;top:612px;width:25px;height:2px;background:linear-gradient(#dccfc2 50%,#8e7968 50%)"></div>
<div class="lad" style="right:634px;top:605px">D0</div>
<div class="a" style="left:840px;top:612px;width:25px;height:2px;background:linear-gradient(#dccfc2 50%,#8e7968 50%)"></div>
<div class="lad" style="left:867px;top:605px;">D3</div>
<div class="a" style="left:760px;top:637px;width:80px;height:16px;background:#fbc894;border-left:1px solid #fde0c4;border-top:1px solid #fde0c4;border-right:1px solid #a88466;box-sizing:border-box"></div>
<div class="lad" style="left:779px;top:637px;">MOVE</div>
<div class="a" style="left:398px;top:275px;width:3px;height:3px;background:#000"></div>
<div class="a" style="left:398px;top:339px;width:3px;height:3px;background:#000"></div>
<div class="a" style="left:398px;top:419px;width:3px;height:3px;background:#000"></div>
<div class="a" style="left:398px;top:595px;width:3px;height:3px;background:#000"></div>
<div class="a" style="left:494px;top:595px;width:3px;height:3px;background:#000"></div>
<div class="a" style="left:686px;top:595px;width:3px;height:3px;background:#000"></div>
<div class="a" style="left:398px;top:643px;width:3px;height:3px;background:#000"></div>
</div>
<div class="a" style="left:1255px;top:259px;width:17px;height:395px;background:#e8e8ec"></div>
<div class="a" style="left:1260px;top:313px;width:7px;height:124px;background:#cdcdd4"></div>
<div class="a" style="left:302px;top:654px;width:970px;height:17px;background:#e8e8ec"></div>
<div class="a" style="left:320px;top:660px;width:105px;height:7px;background:#cdcdd4"></div>
<svg style="left:1255px;top:259px" width="17" height="411"><g stroke="#222" stroke-width="1.100" fill="none"><path d="M2 8.500h13M2 11.500h13M8.500 3v5M8.500 17v-5"/><path d="M6 5.500l2.500-2.500l2.500 2.500M6 14.500l2.500 2.500l2.500-2.500"/></g><path d="M4 27h9l-4.500-4.500z" fill="#a0a0a8"/><path d="M4 383h9l-4.500 4.500z" fill="#a0a0a8"/><path d="M-9 398v9l4.500-4.500z" fill="#a0a0a8"/></svg>
<svg style="left:302px;top:654px" width="20" height="17"><path d="M13 4v9l-4.500-4.500z" fill="#a0a0a8"/></svg>
<!-- ===== RIGHT PANEL ===== -->
<div class="ph" style="left:1279px;top:84px;width:82px;height:22px"></div>
<div class="a" style="left:1282px;top:87px;width:27px;height:16px;overflow:hidden"><div class="pht" style="left:1px;top:0">进入:</div></div>
<svg style="left:1311px;top:89px" width="44" height="12"><path d="M0.500 4h8.500l-4.250 5z" fill="#fff"/><path d="M18 1.500h5M19 1.500v6M22 1.500v6M16.500 7.500h8M20.500 7.500v4" stroke="#fff" stroke-width="1.500" fill="none"/><rect x="21" y="2" width="1.500" height="5" fill="#fff"/><path d="M33.500 2l8 8M41.500 2l-8 8" stroke="#fff" stroke-width="2" fill="none"/></svg>
<div class="a" style="left:1279px;top:106px;width:82px;height:132px;background:#cfd6e5;border-left:1px solid #8e9bbc;border-right:1px solid #8e9bbc;box-sizing:border-box"></div>
<div class="a" style="left:1282px;top:132px;width:76px;height:1px;background:#8591a8"></div>
<div class="a" style="left:1282px;top:160px;width:76px;height:1px;background:#8591a8"></div>
<div class="a" style="left:1282px;top:210px;width:76px;height:1px;background:#8591a8"></div>
<svg style="left:1279px;top:106px" width="82" height="132" font-family="Liberation Sans, sans-serif">
<g><path d="M5 6.500h3v3h-3" fill="none" stroke="#222" stroke-width="1.100"/><rect x="4.500" y="15" width="4.500" height="4.500" fill="#222"/><path d="M17 13h-6M13.500 10l-3 3l3 3" stroke="#17509a" stroke-width="1.800" fill="none"/><path d="M21.500 11h-3v4h3" fill="none" stroke="#222" stroke-width="1.100"/></g>
<g><rect x="27" y="5.500" width="4.500" height="4.500" fill="#777"/><path d="M27.500 16h3v3h-3" fill="none" stroke="#777" stroke-width="1.100"/><path d="M39 13h-6M35.500 10l-3 3l3 3" stroke="#888" stroke-width="1.800" fill="none"/><path d="M43.500 11h-3v4h3" fill="none" stroke="#777" stroke-width="1.100"/></g>
<path d="M50 7l11 11M61 7l-11 11" stroke="#777" stroke-width="1.800" fill="none"/>
<g><path d="M7.300 41.500v4.500h5" fill="none" stroke="#6a625a" stroke-width="2.200"/><path d="M11.800 38v5h4.500" fill="none" stroke="#2a7fd0" stroke-width="2.400"/><circle cx="17.300" cy="37.200" r="4" fill="#f7a823"/></g>
<text x="5.500" y="72" font-size="10.500" font-weight="bold" fill="#281838" textLength="16" lengthAdjust="spacingAndGlyphs">ASCII</text>
<text x="28" y="72" font-size="10.500" font-weight="bold" fill="#281838" textLength="14.500" lengthAdjust="spacingAndGlyphs">DEC</text>
<text x="50" y="72" font-size="10.500" font-weight="bold" fill="#281838" textLength="14.500" lengthAdjust="spacingAndGlyphs">BIN</text>
<text x="5.500" y="94.500" font-size="10.500" font-weight="bold" fill="#281838" textLength="14.500" lengthAdjust="spacingAndGlyphs">HEX</text>
<text x="28" y="94.500" font-size="10.500" font-weight="bold" fill="#281838" textLength="14.500" lengthAdjust="spacingAndGlyphs">DFT</text>
<path d="M5.500 125.500l1.200-4.200l9-9l3 3l-9 9z" fill="#8a8a8a"/><path d="M5.500 125.500l1.200-4.200l3 3z" fill="#555"/>
<g transform="translate(35 118.500) scale(0.82)"><path d="M-1.400-7h2.800l.5 2 1.600.7 1.800-1.100 2 2-1.100 1.800.7 1.600 2 .5v2.800l-2 .5-.7 1.600 1.100 1.800-2 2-1.800-1.100-1.600.7-.5 2h-2.800l-.5-2-1.600-.7-1.800 1.100-2-2 1.100-1.800-.7-1.600-2-.5v-2.800l2-.5.7-1.600-1.100-1.800 2-2 1.800 1.100 1.600-.7z" fill="#2a2a2a"/><circle r="2.300" fill="#cfd6e5"/></g>
</svg>
<div class="a" style="left:1280px;top:238px;width:80px;height:24px;background:#fff;border:1px solid #c4cbdc;box-sizing:border-box"></div>
<div class="a" style="left:1282px;top:241px;width:62px;height:18px;overflow:hidden"><div class="t" style="left:0;top:1px;font-size:13px;color:#a8a8a8">过滤: (Ctrl+I)</div></div>
<svg style="left:1349px;top:247px" width="8" height="6"><path d="M0 0.500h7l-3.500 4z" fill="#222"/></svg>
<div class="a" style="left:1280px;top:262px;width:80px;height:24px;background:#4d6082"></div>
<div class="a" style="left:1303px;top:262px;width:1px;height:24px;background:#33466a"></div>
<div class="a" style="left:1279px;top:286px;width:82px;height:386px;background:#fff"></div>
<div class="a" style="left:1280px;top:286px;width:80px;height:1px;background:repeating-linear-gradient(90deg,#000 0 1px,#fff 1px 2px)"></div>
<div class="a" style="left:1280px;top:307px;width:80px;height:1px;background:repeating-linear-gradient(90deg,#000 0 1px,#fff 1px 2px)"></div>
<div class="t" style="left:1293px;top:289px;font-size:13px;color:#5aa2bc">1</div>
<div class="a" style="left:1280px;top:655px;width:80px;height:17px;background:#f0f0f2"></div>
<div class="a" style="left:1296px;top:656px;width:17px;height:15px;background:#c8c8cc"></div>
<svg style="left:1280px;top:655px" width="80" height="17"><path d="M9 4.500l-4 4l4 4" fill="none" stroke="#444" stroke-width="1.700"/><path d="M70 4.500l4 4l-4 4" fill="none" stroke="#444" stroke-width="1.700"/></svg>
<!-- ===== BOTTOM ===== -->
<div class="t" style="left:12px;top:683px;font-size:12px;color:#fff">编译/检查</div>
<div class="t" style="left:83px;top:683px;font-size:12px;color:#fff">查找结果1</div>
<div class="t" style="left:156px;top:683px;font-size:12px;color:#fff">查找结果3</div>
<div class="a" style="left:5px;top:701px;width:217px;height:6px;background:#3b4d78"></div>
<div class="a" style="left:0;top:707px;width:1366px;height:21px;background:#424f8e"></div>
<div class="t" style="left:3px;top:711px;font-size:12px;color:#fff">就绪</div>
<div class="t" style="left:376px;top:711px;font-size:12px;color:#fff">本体</div>
<div class="t" id="st3" style="left:797px;top:711px;font-size:12px;color:#fff;letter-spacing:0.16px">以太网: , 192.168.1.164, 32769</div>
<div class="t" id="st4" style="left:999px;top:711px;font-size:12px;color:#fff;letter-spacing:0.185px">没有指定MEWNET/C-NET网络</div>
<div class="a" style="left:0;top:728px;width:1366px;height:8px;background:#27343d"></div>
<div class="a" style="left:0;top:728px;width:647px;height:8px;background:#2a3a42"></div>
<div class="a" style="left:647px;top:728px;width:83px;height:8px;background:#586870"></div>
<div class="a" style="left:1362px;top:729px;width:1px;height:7px;background:#5a6570"></div>
<div class="a" style="left:1256px;top:728px;width:40px;height:8px;overflow:hidden"><div class="t" style="left:5px;top:3px;font-size:12px;color:#fff">21:20</div></div>
<!-- IME bar -->
<div class="a" style="left:1184px;top:700px;width:182px;height:28px;background:#fff;border:2px solid #3b8beb;border-radius:14px;box-sizing:border-box"></div>
<svg style="left:1166px;top:692px" width="200" height="40" font-family="Liberation Sans, Noto Sans CJK SC, sans-serif">
<circle cx="20" cy="19" r="17" fill="#3b8beb"/>
<ellipse cx="19.500" cy="17.500" rx="7.500" ry="9" fill="none" stroke="#fff" stroke-width="3.200"/>
<path d="M23 24l5.500 4" stroke="#fff" stroke-width="3.500"/><circle cx="29" cy="27" r="2.400" fill="#8ae04a"/>
<text x="49.500" y="27.500" font-size="14" font-weight="bold" text-anchor="middle" fill="#2f7de1">中</text>
<path d="M75.500 17.300A6.100 6.100 0 1 1 67.300 26A7.500 7.500 0 0 0 75.500 17.300Z" fill="#2f7de1"/>
<circle cx="89.500" cy="22.500" r="1.600" fill="none" stroke="#2f7de1" stroke-width="1.100"/><path d="M96 21.500c1.500 0 1.500 2.500-0.500 4.500" fill="none" stroke="#2f7de1" stroke-width="1.700"/>
<g transform="translate(109.700 17) scale(1.230)"><path d="M9.500 1.200L7.400 3.300L6.700 2.600L8.800 0.500A3 3 0 0 0 4.600 4.200L0.600 8.200A0.850 0.850 0 0 0 1.800 9.400L5.800 5.400A3 3 0 0 0 9.500 1.200Z" fill="#2f7de1"/></g>
<circle cx="138" cy="22" r="6.700" fill="none" stroke="#2f7de1" stroke-width="1.700"/><circle cx="135.500" cy="20.500" r="1" fill="#2f7de1"/><circle cx="140.500" cy="20.500" r="1" fill="#2f7de1"/><path d="M134.500 24c2 2.300 5 2.300 7 0" fill="none" stroke="#2f7de1" stroke-width="1.300"/>
<path d="M156.500 16l-3.500 2l1.500 3.500l2-0.500v7h7.500v-7l2 0.500l1.500-3.500l-3.500-2c-1.500 1.500-3.500 1.500-5 0z" fill="#2f7de1"/>
<rect x="176" y="16" width="6" height="5.500" fill="#2f7de1"/><rect x="183.500" y="16" width="5.500" height="5.500" fill="#2f7de1"/><rect x="176" y="23" width="6" height="5.500" fill="#2f7de1"/><rect x="183.500" y="23" width="5.500" height="5.500" fill="#2f7de1"/>
</svg>
</body>
</html>
